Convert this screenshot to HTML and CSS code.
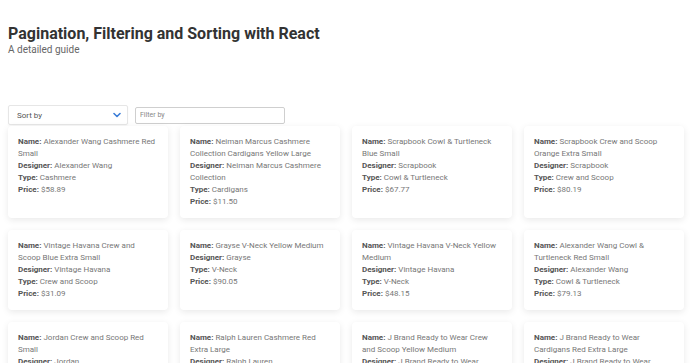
FILE: index.html
```html
<!DOCTYPE html>
<html>
<head>
<meta charset="utf-8">
<link rel="stylesheet" href="styles.css">
</head>
<body>
<header class="header">
  <h1 class="title">Pagination, Filtering and Sorting with React</h1>
  <p class="subtitle">A detailed guide</p>
</header>
<div class="controls">
  <div class="select">
    <span>Sort by</span>
    <svg class="chev" width="8" height="6" viewBox="0 0 8 6"><path d="M1 1.5 L4 4.5 L7 1.5" fill="none" stroke="#3b7dd8" stroke-width="1.6" stroke-linecap="round" stroke-linejoin="round"/></svg>
  </div>
  <input class="filter" type="text" placeholder="Filter by">
</div>
<div class="grid">
  <div class="card"><b>Name:</b> Alexander Wang Cashmere Red Small<br><b>Designer:</b> Alexander Wang<br><b>Type:</b> Cashmere<br><b>Price:</b> $58.89</div>
  <div class="card"><b>Name:</b> Neiman Marcus Cashmere Collection Cardigans Yellow Large<br><b>Designer:</b> Neiman Marcus Cashmere Collection<br><b>Type:</b> Cardigans<br><b>Price:</b> $11.50</div>
  <div class="card"><b>Name:</b> Scrapbook Cowl &amp; Turtleneck Blue Small<br><b>Designer:</b> Scrapbook<br><b>Type:</b> Cowl &amp; Turtleneck<br><b>Price:</b> $67.77</div>
  <div class="card"><b>Name:</b> Scrapbook Crew and Scoop Orange Extra Small<br><b>Designer:</b> Scrapbook<br><b>Type:</b> Crew and Scoop<br><b>Price:</b> $80.19</div>
  <div class="card"><b>Name:</b> Vintage Havana Crew and Scoop Blue Extra Small<br><b>Designer:</b> Vintage Havana<br><b>Type:</b> Crew and Scoop<br><b>Price:</b> $31.09</div>
  <div class="card"><b>Name:</b> Grayse V-Neck Yellow Medium<br><b>Designer:</b> Grayse<br><b>Type:</b> V-Neck<br><b>Price:</b> $90.05</div>
  <div class="card"><b>Name:</b> Vintage Havana V-Neck Yellow Medium<br><b>Designer:</b> Vintage Havana<br><b>Type:</b> V-Neck<br><b>Price:</b> $48.15</div>
  <div class="card"><b>Name:</b> Alexander Wang Cowl &amp; Turtleneck Red Small<br><b>Designer:</b> Alexander Wang<br><b>Type:</b> Cowl &amp; Turtleneck<br><b>Price:</b> $79.13</div>
  <div class="card"><b>Name:</b> Jordan Crew and Scoop Red Small<br><b>Designer:</b> Jordan<br><b>Type:</b> Crew and Scoop<br><b>Price:</b> $22.40</div>
  <div class="card"><b>Name:</b> Ralph Lauren Cashmere Red Extra Large<br><b>Designer:</b> Ralph Lauren<br><b>Type:</b> Cashmere<br><b>Price:</b> $64.20</div>
  <div class="card"><b>Name:</b> J Brand Ready to Wear Crew and Scoop Yellow Medium<br><b>Designer:</b> J Brand Ready to Wear<br><b>Type:</b> Crew and Scoop<br><b>Price:</b> $45.60</div>
  <div class="card"><b>Name:</b> J Brand Ready to Wear Cardigans Red Extra Large<br><b>Designer:</b> J Brand Ready to Wear<br><b>Type:</b> Cardigans<br><b>Price:</b> $37.85</div>
</div>
</body>
</html>
```

FILE: styles.css
```css
* { box-sizing: border-box; }
body {
  margin: 0;
  padding: 0 8px;
  font-family: Roboto, "Liberation Sans", sans-serif;
  background: #fff;
  color: #333;
}
.header { padding-top: 24px; }
.title {
  margin: 0;
  font-size: 16px;
  line-height: 20px;
  font-weight: 700;
  color: #333;
}
.subtitle {
  margin: 0;
  font-size: 10px;
  line-height: 12px;
  color: #666;
}
.controls {
  margin-top: 49px;
  display: flex;
  align-items: center;
  gap: 7px;
}
.select {
  width: 120px;
  height: 20px;
  border: 1px solid #e6e6e6;
  border-radius: 2px;
  display: flex;
  align-items: center;
  justify-content: space-between;
  padding: 0 6px 0 8px;
  font-size: 8px;
  color: #555;
  box-shadow: 0 1px 2px rgba(0,0,0,0.04);
}
.filter {
  width: 150px;
  height: 17px;
  border: 1px solid #cfcfcf;
  border-radius: 2px;
  padding: 0 4px;
  font-family: Roboto, "Liberation Sans", sans-serif;
  font-size: 7px;
  color: #555;
  outline: none;
}
.filter::placeholder { color: #888; }
.grid {
  margin-top: 1px;
  display: grid;
  grid-template-columns: repeat(4, 160px);
  gap: 12px;
}
.card {
  background: #fff;
  border-radius: 4px;
  box-shadow: 0 2px 7px rgba(0,0,0,0.09);
  padding: 10px;
  font-size: 8px;
  line-height: 12px;
  color: #777;
}
.card b {
  font-weight: 700;
  color: #555;
}
```
